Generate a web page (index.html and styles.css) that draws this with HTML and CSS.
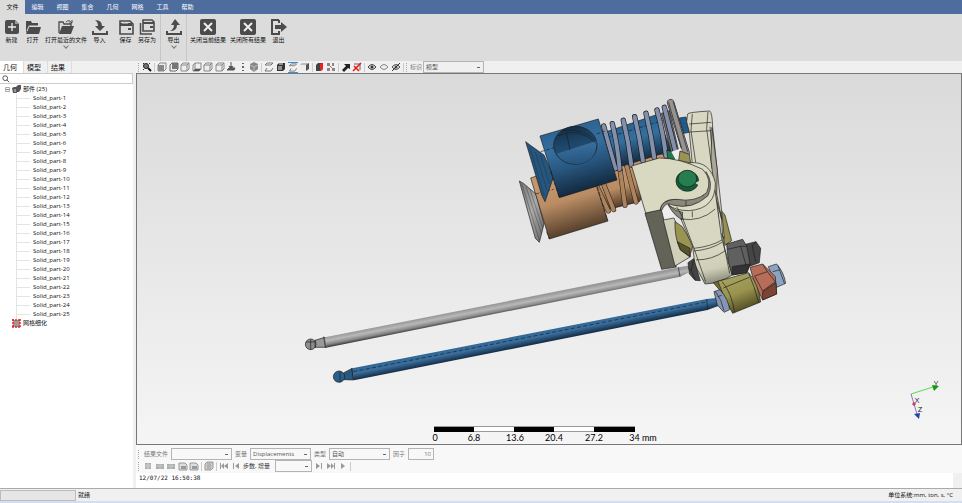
FILE: index.html
```html
<!DOCTYPE html>
<html lang="zh-CN">
<head>
    <meta charset="UTF-8">
    <meta name="viewport" content="width=device-width, initial-scale=1.0">
    <title>几何</title>
    <link rel="stylesheet" href="styles.css">
</head>
<body>
<!-- icon sprites -->
<svg class="sprites" aria-hidden="true">
    <symbol id="i-new" viewBox="0 0 16 16"><path d="M3 1h8l4 4v8q0 2-2 2H3q-2 0-2-2V3q0-2 2-2z" fill="#4b4b4b"/><path d="M11 1v4h4" fill="#999"/><path d="M8 4v8M4 8h8" stroke="#eee" stroke-width="1.3"/></symbol>
    <symbol id="i-open" viewBox="0 0 16 16"><path d="M1 14V2h5l1 2h6v3H5z" fill="#4b4b4b"/><path d="M4 8h12l-2 7H1z" fill="#4b4b4b"/><path d="M2 12l2-5h10" stroke="#ddd" fill="none"/></symbol>
    <symbol id="i-recent" viewBox="0 0 16 16"><path d="M1 14V3h4l1 2h7v2" fill="none" stroke="#4b4b4b" stroke-width="1.3"/><path d="M4 7h12l-3 8H1z" fill="#4b4b4b"/><path d="M8 3q3-3 6 1m0-3v3h-3" fill="none" stroke="#4b4b4b"/></symbol>
    <symbol id="i-import" viewBox="0 0 16 16"><path d="M3 1q7 0 7 6h3l-5 5-5-5h3q0-4-3-6z" fill="#4b4b4b"/><path d="M1 12v3h14v-3" fill="none" stroke="#4b4b4b" stroke-width="2"/></symbol>
    <symbol id="i-save" viewBox="0 0 16 16"><path d="M2 2h10l3 3v10H2z" fill="none" stroke="#4b4b4b" stroke-width="1.6"/><path d="M2 4h12v3H2z" fill="#4b4b4b"/><path d="M4 4h6" stroke="#ddd"/><path d="M10 9h3v2h-3z" fill="#4b4b4b"/></symbol>
    <symbol id="i-saveas" viewBox="0 0 16 16"><path d="M4 1h9l2 2v9H4z" fill="none" stroke="#4b4b4b" stroke-width="1.6"/><path d="M4 3h11v2H4zM11 7h3v2h-3z" fill="#4b4b4b"/><path d="M1.500 4v11H13" fill="none" stroke="#4b4b4b" stroke-width="1.5"/></symbol>
    <symbol id="i-export" viewBox="0 0 16 16"><path d="M9 0l5 6h-3q0 6-7 6 4-2 4-6H5z" fill="#4b4b4b"/><path d="M1 12v3h14v-3" fill="none" stroke="#4b4b4b" stroke-width="2"/></symbol>
    <symbol id="i-close" viewBox="0 0 16 16"><rect width="16" height="16" rx="2" fill="#4b4b4b"/><path d="M4 4l8 8M12 4l-8 8" stroke="#eee" stroke-width="2"/></symbol>
    <symbol id="i-exit" viewBox="0 0 16 16"><path d="M8 1H1v14h7v-3M8 1v3" fill="none" stroke="#4b4b4b" stroke-width="2"/><path d="M4 6h6V3l6 5-6 5v-3H4z" fill="#4b4b4b"/></symbol>
    <symbol id="i-zoom" viewBox="0 0 10 10"><circle cx="4" cy="4" r="2.500" fill="#777" stroke="#222"/><path d="M6 6l3 3" stroke="#111" stroke-width="2"/><path d="M1 1l1 1M8 1L7 2M1 8l1-1" stroke="#333"/></symbol>
    <symbol id="i-box" viewBox="0 0 10 10"><path d="M1 3l2-2h6v6L7 9H1zM1 3h6l2-2M7 3v6" fill="#eee" stroke="#888"/></symbol>
    <symbol id="i-boxfront" viewBox="0 0 10 10"><path d="M1 3l2-2h6v6L7 9H1z" fill="#eee" stroke="#888"/><path d="M1 3h6v6H1z" fill="#888"/></symbol>
    <symbol id="i-boxback" viewBox="0 0 10 10"><path d="M1 3l2-2h6v6L7 9H1z" fill="#eee" stroke="#666"/><path d="M3 1h6v6H3z" fill="#777"/></symbol>
    <symbol id="i-boxbottom" viewBox="0 0 10 10"><path d="M1 3l2-2h6v6L7 9H1zM3 1v6h6" fill="#eee" stroke="#888"/><path d="M1 9l2-2h6L7 9z" fill="#555"/></symbol>
    <symbol id="i-wire" viewBox="0 0 10 10"><path d="M1 3l2-2h6L7 3H1M9 6L7 9H1l2-3" fill="none" stroke="#777"/></symbol>
    <symbol id="i-mesh" viewBox="0 0 10 10"><path d="M1 3l2-2h6v6L7 9H1z" fill="#333"/><path d="M2 5h4M2 7h4M3 2h4" stroke="#eee"/></symbol>
    <symbol id="i-solid" viewBox="0 0 10 10"><path d="M0 3l2-2h7L7 3z" fill="#bbb"/><path d="M6 3l3-2v6L6 9z" fill="#555"/><path d="M0 3h6v6H0z" fill="#eee"/></symbol>
    <symbol id="i-normal" viewBox="0 0 10 10"><path d="M5 0v6M3 4l2 3 2-3M1 8l2-2h6L8 8z" fill="#555" stroke="#555"/></symbol>
    <symbol id="i-dots" viewBox="0 0 10 10"><path d="M4 1h2v1H4zM4 4h2v2H4zM4 8h2v1H4z" fill="#666"/></symbol>
    <symbol id="i-iso" viewBox="0 0 10 10"><path d="M5 0l4 2v5l-4 3-4-3V2z" fill="#888"/><path d="M1 3l4 2 4-2M5 5v4" fill="none" stroke="#bbb"/></symbol>
    <symbol id="i-cut" viewBox="0 0 10 10"><path d="M1 3l2-2h5v6L6 9H1z" fill="#444"/><path d="M5 2l3-1v6L5 9z" fill="#e22"/></symbol>
    <symbol id="i-explode" viewBox="0 0 10 10"><path d="M1 1h3v3H1zM6 1h2v3H6zM1 6h3v3H1zM6 6h3v3H6z" fill="#888"/><path d="M3 3l4 4" stroke="#b66"/></symbol>
    <symbol id="i-arrow" viewBox="0 0 10 10"><path d="M1 8l4-4-2-2h6v5L7 6l-4 4z" fill="#222"/></symbol>
    <symbol id="i-arrowx" viewBox="0 0 10 10"><path d="M2 2h6v6" fill="none" stroke="#666"/><path d="M1 9l8-8M2 4l5 5" stroke="#e11" stroke-width="1.500"/></symbol>
    <symbol id="i-eye" viewBox="0 0 10 10"><path d="M1 5q4-5 8 0-4 5-8 0z" fill="#ddd" stroke="#444"/><circle cx="5" cy="5" r="1.500" fill="#333"/></symbol>
    <symbol id="i-eyeoff" viewBox="0 0 10 10"><path d="M1 5q4-5 8 0-4 5-8 0z" fill="#eee" stroke="#888"/></symbol>
    <symbol id="i-eyeswap" viewBox="0 0 10 10"><path d="M1 5q4-5 8 0-4 5-8 0z" fill="#ddd" stroke="#555"/><circle cx="5" cy="5" r="1.500" fill="#555"/><path d="M1 9l8-8" stroke="#333"/></symbol>
    <symbol id="i-table" viewBox="0 0 10 10"><path d="M2 2h6v6H2z" fill="#aaa"/><path d="M2 4h6M2 6h6M5 2v6" stroke="#eee" stroke-width=".5"/></symbol>
    <symbol id="i-tablew" viewBox="0 0 10 10"><path d="M1 3h8v5H1z" fill="#aaa"/><path d="M1 5h8M4 3v5M6 3v5" stroke="#ddd" stroke-width=".5"/></symbol>
    <symbol id="i-tables" viewBox="0 0 10 10"><path d="M1 2h6l2 2v5H1z" fill="#ddd" stroke="#999"/><path d="M3 5h5v3H3z" fill="#999"/></symbol>
    <symbol id="i-anim" viewBox="0 0 10 10"><path d="M1 3l2-2h6v6L7 9H1z" fill="#ccc" stroke="#999"/><path d="M4 2v6M6 2v6" stroke="#999"/></symbol>
    <symbol id="i-first" viewBox="0 0 10 10"><path d="M1 2h1v6H1zM5 2v6L2 5zM9 2v6L5 5z" fill="#999"/></symbol>
    <symbol id="i-prev" viewBox="0 0 10 10"><path d="M2 2h1v6H2zM8 2v6L4 5z" fill="#999"/></symbol>
    <symbol id="i-next" viewBox="0 0 10 10"><path d="M7 2h1v6H7zM2 2v6l4-3z" fill="#999"/></symbol>
    <symbol id="i-last" viewBox="0 0 10 10"><path d="M8 2h1v6H8zM1 2v6l4-3zM5 2v6l3-3z" fill="#999"/></symbol>
    <symbol id="i-play" viewBox="0 0 10 10"><path d="M3 2v6l4-3z" fill="#999"/></symbol>
</svg>

<nav class="menu">
    <a href="#" class="active">文件</a>
    <a href="#">编辑</a>
    <a href="#">视图</a>
    <a href="#">集合</a>
    <a href="#">几何</a>
    <a href="#">网格</a>
    <a href="#">工具</a>
    <a href="#">帮助</a>
</nav>

<div class="ribbon">
    <div class="ribbon-group">
        <button type="button"><svg><use href="#i-new"/></svg>新建</button>
        <button type="button"><svg><use href="#i-open"/></svg>打开</button>
        <button type="button" class="drop"><svg><use href="#i-recent"/></svg>打开最近的文件</button>
        <button type="button"><svg><use href="#i-import"/></svg>导入</button>
    </div>
    <div class="ribbon-group line">
        <button type="button"><svg><use href="#i-save"/></svg>保存</button>
        <button type="button"><svg><use href="#i-saveas"/></svg>另存为</button>
    </div>
    <div class="ribbon-group line">
        <button type="button" class="drop"><svg><use href="#i-export"/></svg>导出</button>
    </div>
    <div class="ribbon-group">
        <button type="button"><svg><use href="#i-close"/></svg>关闭当前结果</button>
        <button type="button"><svg><use href="#i-close"/></svg>关闭所有结果</button>
        <button type="button"><svg><use href="#i-exit"/></svg>退出</button>
    </div>
</div>

<div class="workspace">
    <aside class="side">
        <div class="tabs">
            <button type="button" class="active">几何</button>
            <button type="button">模型</button>
            <button type="button">结果</button>
        </div>
        <div class="search">
            <svg viewBox="0 0 10 10"><circle cx="4" cy="4" r="3" fill="none" stroke="#333"/><path d="M6 6l3 3" stroke="#333"/></svg>
            <input type="text" aria-label="搜索">
        </div>
        <div class="tree">
            <div class="node">
                <svg class="toggle" viewBox="0 0 5 5"><path d="M.5.5h4v4h-4z" fill="#fff" stroke="#aaa"/><path d="M1 2.500h3" stroke="#555" stroke-width=".7"/></svg>
                <svg class="part" viewBox="0 0 9 9"><path d="M0 3l2-1h3v6H1zM4 2l2-2h3v4L7 7H4z" fill="#555"/><path d="M2 4h2v3H2z" fill="#999"/></svg>
                部件 (25)
            </div>
            <ul>
                <li>Solid_part-1</li>
                <li>Solid_part-2</li>
                <li>Solid_part-3</li>
                <li>Solid_part-4</li>
                <li>Solid_part-5</li>
                <li>Solid_part-6</li>
                <li>Solid_part-7</li>
                <li>Solid_part-8</li>
                <li>Solid_part-9</li>
                <li>Solid_part-10</li>
                <li>Solid_part-11</li>
                <li>Solid_part-12</li>
                <li>Solid_part-13</li>
                <li>Solid_part-14</li>
                <li>Solid_part-15</li>
                <li>Solid_part-16</li>
                <li>Solid_part-17</li>
                <li>Solid_part-18</li>
                <li>Solid_part-19</li>
                <li>Solid_part-20</li>
                <li>Solid_part-21</li>
                <li>Solid_part-22</li>
                <li>Solid_part-23</li>
                <li>Solid_part-24</li>
                <li>Solid_part-25</li>
            </ul>
            <div class="node">
                <span class="toggle"></span>
                <svg class="part" viewBox="0 0 9 9"><path d="M1 1h7v7H1z" fill="#999"/><path d="M0 1h9M0 8h9M1 0v9M8 0v9" stroke="#e22" stroke-width="1.500" stroke-dasharray="2 1"/></svg>
                网格细化
            </div>
        </div>
    </aside>

    <main class="main">
        <div class="toolbar">
            <span class="grip"></span>
            <button type="button" aria-label="缩放"><svg><use href="#i-zoom"/></svg></button>
            <span class="sep"></span>
            <div class="tools views">
                <button type="button" aria-label="前"><svg><use href="#i-boxfront"/></svg></button>
                <button type="button" aria-label="后"><svg><use href="#i-boxback"/></svg></button>
                <button type="button" aria-label="上"><svg><use href="#i-box"/></svg></button>
                <button type="button" aria-label="下"><svg><use href="#i-boxbottom"/></svg></button>
                <button type="button" aria-label="左"><svg><use href="#i-box"/></svg></button>
                <button type="button" aria-label="右"><svg><use href="#i-box"/></svg></button>
                <button type="button" aria-label="法向"><svg><use href="#i-normal"/></svg></button>
                <button type="button" aria-label="竖直"><svg><use href="#i-dots"/></svg></button>
                <button type="button" aria-label="等轴"><svg><use href="#i-iso"/></svg></button>
            </div>
            <span class="sep"></span>
            <div class="tools">
                <button type="button" aria-label="线框"><svg><use href="#i-wire"/></svg></button>
                <button type="button" aria-label="单元边"><svg><use href="#i-mesh"/></svg></button>
                <button type="button" aria-label="模型边" class="on"><svg><use href="#i-wire"/></svg></button>
                <button type="button" aria-label="无边"><svg><use href="#i-solid"/></svg></button>
            </div>
            <span class="sep"></span>
            <button type="button" aria-label="剖切"><svg><use href="#i-cut"/></svg></button>
            <button type="button" aria-label="爆炸"><svg><use href="#i-explode"/></svg></button>
            <span class="sep"></span>
            <button type="button" aria-label="查询"><svg><use href="#i-arrow"/></svg></button>
            <button type="button" aria-label="删除"><svg><use href="#i-arrowx"/></svg></button>
            <span class="sep"></span>
            <div class="tools">
                <button type="button" aria-label="显示"><svg><use href="#i-eye"/></svg></button>
                <button type="button" aria-label="隐藏"><svg><use href="#i-eyeoff"/></svg></button>
                <button type="button" aria-label="反转"><svg><use href="#i-eyeswap"/></svg></button>
            </div>
            <span class="sep"></span>
            <span class="grip"></span>
            <label for="symbols">标识</label>
            <select id="symbols" class="w-61"><option>模型</option></select>
        </div>

        <div class="viewport">
            <svg viewBox="137 74 824 370" preserveAspectRatio="xMidYMax meet">
                <defs>
                    <linearGradient id="rodGray" gradientUnits="userSpaceOnUse" x1="-555" y1="742" x2="-549" y2="773">
                        <stop offset="0" stop-color="#999"/><stop offset=".35" stop-color="#b8b8b8"/><stop offset=".7" stop-color="#888"/><stop offset="1" stop-color="#333"/>
                    </linearGradient>
                    <linearGradient id="rodBlue" gradientUnits="userSpaceOnUse" x1="-473" y1="835" x2="-466" y2="870">
                        <stop offset="0" stop-color="#2e6796"/><stop offset=".45" stop-color="#3a6f9f"/><stop offset="1" stop-color="#152f47"/>
                    </linearGradient>
                    <linearGradient id="blue" gradientUnits="userSpaceOnUse" x1="180" y1="110" x2="236" y2="300">
                        <stop offset="0" stop-color="#2c6493"/><stop offset=".3" stop-color="#356f9f"/><stop offset=".6" stop-color="#27557d"/><stop offset="1" stop-color="#12283c"/>
                    </linearGradient>
                    <linearGradient id="shaft" gradientUnits="userSpaceOnUse" x1="370" y1="90" x2="403" y2="215">
                        <stop offset="0" stop-color="#28608f"/><stop offset=".4" stop-color="#34709f"/><stop offset="1" stop-color="#12283c"/>
                    </linearGradient>
                    <linearGradient id="hole" x1="0" y1="0" x2=".3" y2="1">
                        <stop offset="0" stop-color="#122a40"/><stop offset=".5" stop-color="#1d4567"/><stop offset="1" stop-color="#28587f"/>
                    </linearGradient>
                    <linearGradient id="bore" x1="0" y1="0" x2=".2" y2="1">
                        <stop offset="0" stop-color="#3f76a8"/><stop offset="1" stop-color="#27567f"/>
                    </linearGradient>
                    <linearGradient id="tan" gradientUnits="userSpaceOnUse" x1="170" y1="270" x2="217" y2="430">
                        <stop offset="0" stop-color="#c3966c"/><stop offset=".35" stop-color="#b98c64"/><stop offset="1" stop-color="#4b3724"/>
                    </linearGradient>
                    <linearGradient id="neck" gradientUnits="userSpaceOnUse" x1="330" y1="230" x2="362" y2="345">
                        <stop offset="0" stop-color="#c3966c"/><stop offset=".5" stop-color="#b98c64"/><stop offset="1" stop-color="#4b3724"/>
                    </linearGradient>
                    <linearGradient id="coneGray" x1="0" y1="0" x2="1" y2="1">
                        <stop offset="0" stop-color="#777"/><stop offset=".5" stop-color="#aaa"/><stop offset="1" stop-color="#666"/>
                    </linearGradient>
                    <linearGradient id="cream" gradientUnits="userSpaceOnUse" x1="600" y1="480" x2="625" y2="590">
                        <stop offset="0" stop-color="#d8d8c2"/><stop offset=".5" stop-color="#cfcfb8"/><stop offset="1" stop-color="#77776a"/>
                    </linearGradient>
                    <linearGradient id="olive" gradientUnits="userSpaceOnUse" x1="670" y1="560" x2="710" y2="665">
                        <stop offset="0" stop-color="#a5a05c"/><stop offset=".45" stop-color="#99934f"/><stop offset="1" stop-color="#48451e"/>
                    </linearGradient>
                </defs>

                <!-- assembly is drawn at 3x and scaled down -->
                <g class="model" transform="translate(510 90) scale(.3333)">
                    <!-- push rods -->
                    <path d="M-585 751l30-9 3 30-33 0z" fill="#999"/>
                    <path d="M-555 742L505 532l30-5v21l-25 12L-552 773z" fill="url(#rodGray)" class="soft"/>
                    <circle cx="-598" cy="763" r="16" fill="#8d8d8d"/>
                    <path d="M-598 748v30M-612 756h26M-585 751v22M-559 740l5 34M505 532l5 28" fill="none"/>
                    <path d="M-500 849l27-14 4 35-31-1z" fill="#28577f"/>
                    <path d="M-473 835L590 627l35-4v25l-33 12L-468 871z" fill="url(#rodBlue)" class="soft"/>
                    <path d="M-470 845L590 636" fill="none" stroke-dasharray="12 7"/>
                    <circle cx="-513" cy="860" r="17" fill="#295f8b"/>
                    <path d="M-510 844v33M-475 834l5 35M590 627l3 32" fill="none"/>

                    <!-- tan follower -->
                    <path d="M28 273l12 7 38 32 24 90-14 55-12-12z" fill="url(#coneGray)"/>
                    <path d="M36 283l52 167M48 290l46 140M60 298l38 116" fill="none" class="thin"/>
                    <path d="M260 275l80-50 110-34 30 10-92 134-100 25z" fill="url(#neck)"/>
                    <g class="ribs">
                        <path d="M262 293l33 70M282 285l29 74M330 238l15 108M350 228l28 108"/>
                        <path class="fill-tan" d="M262 293l33 70M282 285l29 74M330 238l15 108M350 228l28 108"/>
                    </g>
                    <path d="M62 264l66-22 132 48 34 103-176 54z" fill="url(#tan)"/>
                    <path d="M76 312l55-14M110 425l8 22M262 290l30 100" fill="none" stroke-dasharray="12 5"/>

                    <!-- blue follower and spring -->
                    <path d="M275 130l165-56 45 108-160 50z" fill="url(#shaft)"/>
                    <path d="M290 143l170-52" fill="none" stroke-dasharray="12 5"/>
                    <path d="M454 70l24-8 28 120-22 8z" fill="#6d6b6f"/>
                    <g class="coils">
                        <path d="M281 108l35 128M307 101q16 66 22 136M340 91q16 66 24 134M374 80q16 66 25 133M408 70q16 66 25 133M441 60q18 66 27 138M463 52l34 135"/>
                        <path class="fill-coil" d="M281 108l35 128M307 101q16 66 22 136M340 91q16 66 24 134M374 80q16 66 25 133M408 70q16 66 25 133M441 60q18 66 27 138M463 52l34 135"/>
                    </g>
                    <g class="washer">
                        <path d="M482 38l46 150"/>
                        <path class="fill-gray" d="M482 38l46 150"/>
                        <path class="edge" d="M476 38l40 140M490 36l43 148"/>
                    </g>
                    <path d="M508 84l20-3 10 46-17 3z" fill="#225b8b"/>
                    <path d="M47 155l13 10 42 30 18 40 10 27-25 73-10-20z" fill="#25567f"/>
                    <path d="M60 172l42 145M76 186l34 112M91 194l28 88" fill="none" class="thin"/>
                    <path d="M90 138l175-51 56 183-173 53z" fill="url(#blue)"/>
                    <path d="M92 185l40-12M260 132l25-9M122 245l26 78" fill="none" stroke-dasharray="12 5"/>
                    <ellipse cx="196" cy="166" rx="65" ry="57" fill="url(#hole)"/>
                    <path d="M140 191l119-38q2 66-60 69-42-1-59-31z" fill="url(#bore)" stroke="none"/>
                    <path d="M170 132l10 49M144 137q60-28 113 22M158 122q60-10 99 30" fill="none"/>

                    <!-- rocker arm -->
                    <path d="M470 180l40 14-20 16-16-4z" fill="#1f7a4c"/>
                    <path d="M484 185l30-10 4 28-20 8z" fill="#eee" stroke="none"/>
                    <path d="M510 183l28 10 4 26-36-8z" fill="#999352"/>
                    <path d="M628 355l17 20 20 77-20 14-17-80z" fill="#969052"/>
                    <path d="M533 72q0-5 66-9 8 4 9 50l14 130 13 120 8 82-20-30-10-120-66-72-9-98-8-30z" fill="#d8d8c2"/>
                    <path d="M600 110l12 130 16 170M538 102l66-5M540 126l64-4M547 72l-4 50 14 95M594 66l-4 50 16 120" fill="none"/>
                    <path d="M606 112l16 130-2 70 15 75-20-70-12-110z" fill="#aaa995"/>
                    <path d="M405 370l48-14 46 175-44 7z" fill="#636358"/>
                    <path d="M456 356l25-12 18 50-34 0z" fill="#eee" stroke="none"/>
                    <path d="M460 390l32-6 50 116-47 28z" fill="#d0d0ba"/>
                    <path d="M495 395l22 15 32 55-10 35-28-20q-18-40-16-85z" fill="#9a9452"/>
                    <path d="M502 455l38 20v25l-28-20z" fill="#57532b"/>
                    <path d="M475 345l140-45 20 145 32 110q-38 26-82 27l-30-57-7-55-38-90z" fill="url(#cream)"/>
                    <path d="M475 345q20 20 43 22l-2 22q-26-14-41-44z" fill="#8a8979"/>
                    <path d="M512 387q60 10 104-30M518 385l34 90q50-5 84-25M552 483q50-4 84-26M552 475l35 100M633 365l6 85 20 100M558 510q50 0 88-28" fill="none"/>
                    <path d="M540 218q60-5 76 60 2 78-78 84-42 0-62-17l18-18z" fill="#dcdcc7"/>
                    <path d="M588 245q24 34 6 72-48 44-106 28-22-12-32 15h-6q0-30 50-33l80-10z" fill="#8a8979"/>
                    <path d="M365 228l83-24q60 0 130 34 30 30 12 70-34 30-90 20-45-2-50 32l-43 9z" fill="#d9d8c1"/>
                    <path d="M528 332v16M547 364v18M500 350l20 36" fill="none"/>
                    <ellipse cx="532" cy="273" rx="34" ry="31" fill="#145b37"/>
                    <ellipse cx="532" cy="266" rx="28" ry="25" fill="#277d50"/>
                    <path d="M568 272l-12 7 12 8" fill="#d8d8c2" stroke="none"/>

                    <!-- nuts and pivots -->
                    <path d="M534 518l17-12 20 66-16-1-17-20z" fill="#444"/>
                    <path d="M534 533l10 9 12 28M544 542l6-32" fill="none"/>
                    <path d="M702 464l36-9 14 20-4 43-33 12z" fill="#454545"/>
                    <path d="M727 468l10 48M738 455l-11 13" fill="none"/>
                    <path d="M650 462l48-14 12 20 10 52-9 27-44 8-12-40z" fill="#606060"/>
                    <path d="M667 530l53-8-9 26-44 7z" fill="#333"/>
                    <path d="M652 478l40-9 18 0M692 469l16 56" fill="none"/>
                    <path d="M775 530l25-8q22 25 27 58l-27 12z" fill="#8da3c2"/>
                    <path d="M804 527l20 55M788 545l20-5" fill="none"/>
                    <path d="M720 532l38-10 38 38 4 52-42 18-24-50z" fill="#b66e59"/>
                    <path d="M758 606l40-28 2 34-42 18z" fill="#7c4435"/>
                    <path d="M734 558l38-13 24 30-38 28zM772 545l-14-22" fill="none"/>
                    <path d="M610 578l34-10 20 60-20-10z" fill="#6f6a32"/>
                    <path d="M624 574l92-26q30 35 36 88l-84 34q-26-44-44-96z" fill="url(#olive)"/>
                    <path d="M636 575q28 30 38 92M640 594l78-32M716 550q18 40 30 88" fill="none"/>
                    <path d="M612 605l18-6q25 28 29 60l-17 8-20-22z" fill="#8595b5"/>
                    <path d="M616 604q20 26 26 58M623 620l12-4" fill="none"/>
                </g>

                <!-- scale bar -->
                <g class="scale">
                    <path d="M434 426h201v6H434z" fill="#999"/>
                    <path d="M435 427h199v4H435z" fill="#fff"/>
                    <path d="M434 427h40v5h-40zM514 427h40v5h-40zM594 427h41v5h-41z" fill="#000"/>
                    <text x="435" y="441">0</text>
                    <text x="474" y="441">6.8</text>
                    <text x="515" y="441">13.6</text>
                    <text x="554" y="441">20.4</text>
                    <text x="594" y="441">27.2</text>
                    <text x="643" y="441">34 mm</text>
                </g>

                <!-- axis triad -->
                <g class="triad">
                    <path d="M911 394l22-7" stroke="#5d5"/>
                    <path d="M932 385l7 1-5 5z" fill="#191"/>
                    <path d="M911 394l6 20" stroke="#87c"/>
                    <path d="M914 414l6-1-1 6z" fill="#24a"/>
                    <path d="M912 404h4M914 402v4" stroke="#c23"/>
                    <text x="936" y="386">Y</text>
                    <text x="917" y="403">X</text>
                    <text x="920" y="412">Z</text>
                </g>
            </svg>
        </div>

        <div class="results">
            <div class="result-row fields">
                <span class="grip"></span>
                <label for="resultFile">结果文件</label>
                <select id="resultFile" class="w-61"><option></option></select>
                <label for="variable">变量</label>
                <select id="variable" class="w-61"><option>Displacements</option></select>
                <label for="type">类型</label>
                <select id="type" class="w-61"><option>自动</option></select>
                <label for="factor">因子</label>
                <input type="text" id="factor" value="10">
            </div>
            <div class="result-row">
                <span class="grip"></span>
                <div class="tools tables">
                    <button type="button" aria-label="表格"><svg><use href="#i-table"/></svg></button>
                    <button type="button" aria-label="行"><svg><use href="#i-tablew"/></svg></button>
                    <button type="button" aria-label="列"><svg><use href="#i-tablew"/></svg></button>
                    <button type="button" aria-label="复制"><svg><use href="#i-tables"/></svg></button>
                    <button type="button" aria-label="粘贴"><svg><use href="#i-tables"/></svg></button>
                </div>
                <span class="sep"></span>
                <button type="button" aria-label="动画"><svg><use href="#i-anim"/></svg></button>
                <span class="sep"></span>
                <button type="button" aria-label="第一步"><svg><use href="#i-first"/></svg></button>
                <button type="button" aria-label="上一步"><svg><use href="#i-prev"/></svg></button>
                <label for="step" class="dark">步数, 增量</label>
                <select id="step" class="w-37"><option></option></select>
                <button type="button" aria-label="下一步"><svg><use href="#i-next"/></svg></button>
                <button type="button" aria-label="最后一步"><svg><use href="#i-last"/></svg></button>
                <button type="button" aria-label="播放"><svg><use href="#i-play"/></svg></button>
                <span class="sep"></span>
            </div>
        </div>
        <div class="output">12/07/22 16:50:38</div>
    </main>
</div>

<footer class="status">
    <div class="progress"></div>
    <span>就绪</span>
    <span class="units">单位系统:mm, ton, s, °C</span>
</footer>
</body>
</html>
```
FILE: styles.css
```css
* {
    box-sizing: border-box;
}
body {
    margin: 0;
    height: 100vh;
    display: flex;
    flex-direction: column;
    overflow: hidden;
    background-color: #f0f0f0;
    color: #111;
    font-family: "Open Sans", "Noto Sans CJK SC", sans-serif;
    font-size: 6px;
    line-height: 9px;
}
button, input, select {
    margin: 0;
    padding: 0;
    border: none;
    border-radius: 0;
    background: none;
    color: inherit;
    font: inherit;
}
.sprites {
    display: none;
}

/* menu */
.menu {
    display: flex;
    height: 14px;
    background-color: #4e6d9f;
}
.menu a {
    width: 25px;
    color: #fff;
    line-height: 14px;
    text-align: center;
    text-decoration: none;
}
.menu a.active {
    background-color: #dcdcdc;
    color: #111;
}

/* ribbon */
.ribbon {
    display: flex;
    height: 47px;
    background-color: #dcdcdc;
}
.ribbon-group {
    display: flex;
    padding: 5px 2px 0 1px;
    border-right: 1px solid transparent;
}
.ribbon-group.line {
    padding-left: 2px;
    border-right-color: #c6c6c6;
}
.ribbon-group button {
    display: flex;
    flex-direction: column;
    align-items: center;
    min-width: 21px;
    padding: 0 2px;
    white-space: nowrap;
}
.ribbon-group svg {
    width: 16px;
    height: 16px;
    margin-bottom: 1px;
}
.ribbon-group .drop::after {
    content: "";
    width: 3px;
    height: 3px;
    margin-top: -1px;
    border: solid #777;
    border-width: 0 1px 1px 0;
    transform: rotate(45deg);
}

.workspace {
    display: flex;
    flex: 1;
    min-height: 0;
}

/* left panel */
.side {
    display: flex;
    flex-direction: column;
    width: 133px;
    margin-right: 3px;
    background-color: #fff;
}
.tabs {
    display: flex;
    height: 12px;
    background-color: #f0f0f0;
}
.tabs button {
    width: 24px;
    padding-right: 3px;
    border-right: 1px solid #ddd;
    font-size: 7px;
}
.tabs .active {
    background-color: #fff;
}
.search {
    display: flex;
    align-items: center;
    height: 11px;
    padding-left: 2px;
    border: 1px solid #ccc;
    border-left: none;
}
.search svg {
    width: 8px;
    height: 8px;
}
.search input {
    flex: 1;
    min-width: 0;
    height: 9px;
    outline: none;
}
.tree {
    flex: 1;
    padding: 1px 0 0 5px;
}
.node {
    display: flex;
    align-items: center;
    gap: 2px;
    height: 9px;
}
.toggle {
    width: 5px;
    height: 5px;
}
.part {
    width: 9px;
    height: 9px;
}
.tree ul {
    margin: 0 0 0 11px;
    padding: 0;
    border-left: 1px solid #e4e4e4;
    list-style: none;
}
.tree li {
    display: flex;
    align-items: center;
    gap: 3px;
    height: 9px;
}
.tree li::before {
    content: "";
    width: 13px;
    border-top: 1px solid #e4e4e4;
}

/* toolbars */
.main {
    display: flex;
    flex-direction: column;
    flex: 1;
    min-width: 0;
}
.toolbar {
    display: flex;
    align-items: center;
    gap: 1px;
    height: 12px;
    padding-left: 2px;
}
.toolbar .sep {
    margin: 0 1px;
}
.toolbar button, .result-row button {
    width: 10px;
    height: 11px;
}
.toolbar svg, .result-row svg {
    display: block;
    width: 10px;
    height: 10px;
}
.toolbar .on {
    border-top: 1px solid #3b8fd0;
    border-bottom: 1px solid #3b8fd0;
}
.toolbar .on svg {
    height: 9px;
}
.tools {
    display: flex;
    gap: 2px;
}
.tools.views {
    width: 102px;
    gap: 0;
    justify-content: space-between;
}
.grip {
    width: 1px;
    height: 9px;
    margin-right: 2px;
    border-left: 1px dotted #aaa;
}
.sep {
    width: 1px;
    height: 9px;
    background-color: #ccc;
}
label {
    color: #777;
    white-space: nowrap;
}
label.dark {
    margin-right: 3px;
    color: #333;
}
select {
    appearance: none;
    height: 12px;
    padding: 0 8px 0 2px;
    border: 1px solid #b4b4b4;
    background: linear-gradient(#666, #666) right 3px center / 3px 1px no-repeat;
    color: #555;
}
.w-61 {
    width: 61px;
}
.w-37 {
    width: 37px;
}

/* 3d view */
.viewport {
    flex: 1;
    min-height: 0;
    border: 1px solid #777;
    background: linear-gradient(#dadada, #f5f5f5);
}
.viewport svg {
    display: block;
    width: 100%;
    height: 100%;
}
.model {
    stroke: #1d1d1d;
    stroke-width: 2;
    stroke-linejoin: round;
}
.model .soft {
    stroke: none;
}
.model .thin {
    stroke-width: 1;
}
.ribs, .coils, .washer {
    fill: none;
    stroke-linecap: round;
}
.ribs {
    stroke-width: 15;
}
.coils {
    stroke-width: 16;
}
.washer {
    stroke-width: 22;
}
.fill-tan {
    stroke: #ae835b;
    stroke-width: 12;
}
.fill-coil {
    stroke: #8390ad;
    stroke-width: 12;
}
.fill-gray {
    stroke: #969292;
    stroke-width: 19;
}
.edge {
    stroke-width: 2;
}
.scale text {
    font-family: Lato, sans-serif;
    font-size: 9px;
    text-anchor: middle;
}
.triad {
    fill: none;
}
.triad text {
    fill: #222;
    font-size: 8px;
    text-anchor: middle;
}

/* results */
.results {
    padding: 3px 0 1px 2px;
    background-color: #f8f8f8;
}
.result-row {
    display: flex;
    align-items: center;
    gap: 2px;
    height: 12px;
}
.result-row.fields {
    gap: 3px;
}
.tools.tables {
    width: 56px;
    gap: 0;
    justify-content: space-between;
}
.result-row input {
    width: 26px;
    height: 12px;
    padding-right: 2px;
    border: 1px solid #b4b4b4;
    color: #777;
    text-align: right;
}
.output {
    height: 15px;
    margin-right: 9px;
    padding-left: 3px;
    background-color: #fff;
    font-family: "DejaVu Sans Mono", monospace;
    font-size: 6px;
}

/* status bar */
.status {
    display: flex;
    align-items: center;
    gap: 2px;
    height: 15px;
    padding-right: 9px;
    border-top: 1px solid #aaa;
    border-bottom: 2px solid #d3dff0;
}
.progress {
    width: 76px;
    height: 11px;
    border: 1px solid #bcbcbc;
    background-color: #e6e6e6;
}
.units {
    margin-left: auto;
}
```
